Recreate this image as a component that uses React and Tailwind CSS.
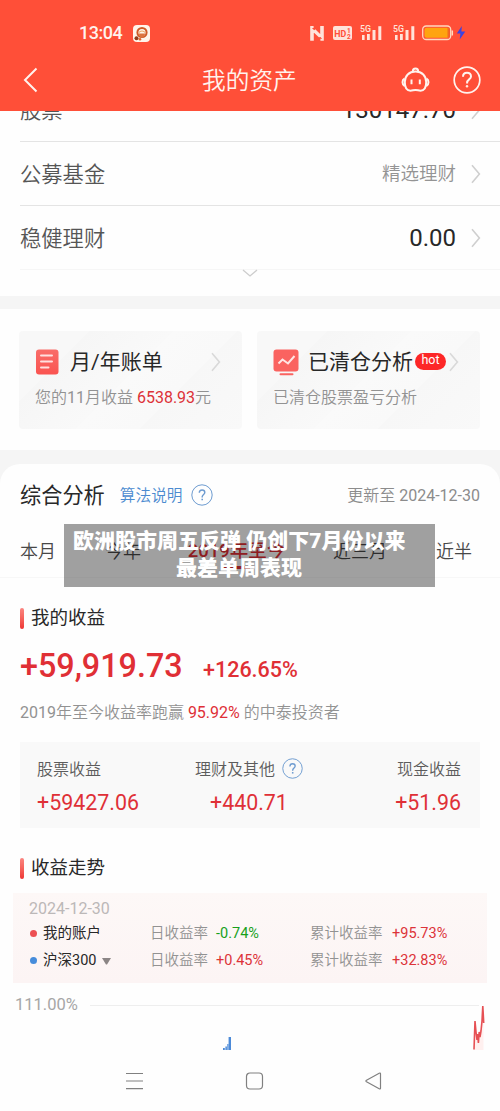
import React from "react";

const Chevron = ({ className = "" }) => (
  <svg className={className} width="10" height="20" viewBox="0 0 10 20" fill="none" stroke="#cfcfcf" strokeWidth="1.6">
    <path d="M1 1.2 8.4 10 1 18.8" />
  </svg>
);

const Help = ({ size = 22, stroke = "#6d9bd0" }) => (
  <svg width={size} height={size} viewBox="0 0 22 22" fill="none" stroke={stroke} className="shrink-0">
    <circle cx="11" cy="11" r="10.2" strokeWidth="1" />
    <path d="M8.3 8.8c0-1.7 1.1-2.8 2.8-2.8s2.7 1.1 2.7 2.5c0 1.9-2.6 2.1-2.6 4.3v.6" strokeWidth="1.4" />
    <path d="M10.4 15.5h1.6" strokeWidth="1.6" />
  </svg>
);

const Signal = () => (
  <svg width="24" height="17" viewBox="0 0 24 17" fill="#ffe3da">
    <text x="0" y="7.300" fontSize="9.300" fontWeight="500" fontFamily="Roboto, sans-serif" textLength="11" lengthAdjust="spacingAndGlyphs">5G</text>
    <rect x="2" y="10" width="2.600" height="5" />
    <rect x="7" y="9" width="2.800" height="6" />
    <rect x="12.500" y="5" width="3" height="10" />
    <rect x="18.300" y="1.200" width="3" height="13.800" />
  </svg>
);

function StatusBar() {
  return (
    <div className="flex h-[50px] items-center pt-4 pl-[79px]">
      <span className="w-[54px] text-[18px] leading-none font-medium tracking-[-0.5px]">13:04</span>
      <svg width="17" height="17" viewBox="0 0 17 17">
        <rect width="17" height="17" rx="4" fill="#fff4ea" />
        <circle cx="9" cy="7.5" r="4.6" fill="none" stroke="#cf5a27" strokeWidth="2" />
        <path d="M5.5 8.5h7l-2.2 4H7.5z" fill="#dc7440" />
        <path d="M6 7.5c1.5-2 4.500-2 6 0" fill="none" stroke="#e8a35c" strokeWidth="1.2" />
        <circle cx="3.5" cy="13.3" r="2" fill="#8f3b1a" />
        <circle cx="7" cy="14.300" r="1.3" fill="#e2662f" />
      </svg>
      <svg className="ml-[160px]" width="14" height="15" viewBox="0 0 14 15" fill="none">
        <path d="M3.600.9H1.200v12.800h1.600V4.200l7 6.500M10.400 13.700h2.400V.9h-1.600v9.500L4.600 4" stroke="#ffe3da" strokeWidth="2" />
      </svg>
      <svg className="ml-[9px]" width="19" height="14" viewBox="0 0 19 14">
        <rect width="19" height="14" rx="2" fill="#ffe3da" />
        <g fill="#ff4f38" fontFamily="Roboto, sans-serif" fontWeight="700">
          <text x="1.300" y="10.600" fontSize="9.500" textLength="12" lengthAdjust="spacingAndGlyphs">HD</text>
          <text x="14" y="6.500" fontSize="6.500">1</text>
          <text x="14" y="12.800" fontSize="6.500">2</text>
        </g>
      </svg>
      <div className="ml-[8px] flex gap-[9px]"><Signal /><Signal /></div>
      <svg className="ml-[5px]" width="45" height="16" viewBox="0 0 45 16">
        <rect x=".7" y="1" width="28" height="13.500" rx="3.500" fill="none" stroke="#ffd9bd" strokeWidth="1.300" />
        <rect x="2.500" y="2.800" width="24.500" height="10" rx="2" fill="#ffa40f" />
        <path d="M25.500 3c1.500 0 2 .8 2 2v5.500c0 1.300-.5 2-2 2z" fill="#f26b1d" />
        <path d="M30.300 5.500v5" stroke="#ffd9bd" strokeWidth="1.500" />
        <path d="M39.800 1 34.800 8.600h3.600l-.7 5.800 5.600-7.800h-3.900z" fill="#3d43e0" />
      </svg>
    </div>
  );
}

function Header() {
  return (
    <header className="h-[111px] shrink-0 bg-[#ff4f38] text-[#fff3ee]">
      <StatusBar />
      <div className="flex h-[60px] items-center pr-[19px] pl-[23px]">
        <svg width="16" height="26" viewBox="0 0 16 26" fill="none" stroke="currentColor" strokeWidth="2">
          <path d="M13.500 1.500 2 13l11.500 11.500" />
        </svg>
        <h1 className="mt-[2px] ml-[163px] text-[23.700px] leading-[34px] font-[350]">我的资产</h1>
        <div className="ml-auto flex items-center gap-[23px]">
          <svg width="29" height="26" viewBox="0 0 29 26" fill="none" stroke="currentColor" strokeWidth="2">
            <path d="M14.500 4.500C8 4.500 3.800 8.800 3.800 15c0 5.500 2 8.700 5.700 8.700 2 0 3-.8 5-.8s3 .8 5 .8c3.700 0 5.700-3.200 5.700-8.700 0-6.200-4.200-10.500-10.700-10.500Z" />
            <path d="M3.500 11.500C.8 13 .8 17.500 3.700 19M25.500 11.500c2.700 1.500 2.700 6-.2 7.500" />
            <path d="M11.800 4.500c0-4 5.400-4 5.400 0" />
            <path d="M10.500 12.500v4.700M18.800 12.500v4.700" />
          </svg>
          <svg width="28" height="28" viewBox="0 0 28 28" fill="none" stroke="currentColor">
            <circle cx="14" cy="14" r="12.800" strokeWidth="1.700" />
            <path d="M10 10.800c0-2.400 1.600-4 4-4s4 1.500 4 3.700c0 2.800-3.900 3-3.900 6.200v.8" strokeWidth="2" />
            <circle cx="14" cy="20.300" r="1" fill="currentColor" strokeWidth=".6" />
          </svg>
        </div>
      </div>
    </header>
  );
}

const AssetRow = ({ label, children, line = "border-[#e4e4e4]" }) => (
  <div className={`ml-[20px] flex h-[64px] shrink-0 items-center border-b pr-[19px] ${line}`}>
    <span className="flex-1 pt-[2px] text-[21.300px] font-[350] text-[#555]">{label}</span>
    {children}
    <Chevron className="ml-[15px]" />
  </div>
);

function Assets() {
  return (
    <section className="h-[185px] shrink-0">
      <div className="flex h-[31px] flex-col justify-end overflow-hidden">
        <AssetRow label="股票"><span className="text-[24px]">130147.70</span></AssetRow>
      </div>
      <AssetRow label="公募基金"><span className="pt-[2px] text-[18.500px] font-[350] text-[#949494]">精选理财</span></AssetRow>
      <AssetRow label="稳健理财" line="border-[#f6f6f6]"><span className="text-[24px]">0.00</span></AssetRow>
      <svg className="mx-auto -mt-px" width="16" height="9" viewBox="0 0 16 9" fill="none" stroke="#cdcdcd" strokeWidth="1.300">
        <path d="m1 1 7 6 7-6" />
      </svg>
    </section>
  );
}

const Card = ({ icon, title, badge, children, className }) => (
  <div className={`h-[98px] rounded bg-linear-[135deg,#f8f8f8_0%,#f8f8f8_22%,#f6f6f6_22%,#f9f9f9_48%,#fafafa_48%,#f9f9f9_68%,#f7f7f7_68%,#f9f9f9_100%] pt-[13px] ${className}`}>
    <div className="flex h-[36px] items-center">
      {icon}
      <span className="pt-[2px] text-[21px] whitespace-nowrap">{title}</span>
      {badge}
    </div>
    <p className="mt-[5px] text-[16px] leading-[26px] font-[350] whitespace-nowrap text-[#929292]">{children}</p>
  </div>
);

function Cards() {
  return (
    <section className="flex h-[141px] shrink-0 gap-[15px] pt-[22px] pl-[19px]">
      <Card
        className="w-[223px] pl-[16px]"
        title="月/年账单"
        icon={
          <svg className="mr-[10px]" width="25" height="26" viewBox="0 0 25 26">
            <defs>
              <linearGradient id="bill" x1="0" y1="0" x2="0" y2="1"><stop stopColor="#f96d69" /><stop offset="1" stopColor="#fa5350" /></linearGradient>
            </defs>
            <rect x="1" y=".5" width="22.500" height="25" rx="3" fill="url(#bill)" />
            <path d="M6 6.500h11M6 12.500h11M6 18.500h7.500" stroke="#ffe0df" strokeWidth="2" strokeLinecap="round" />
          </svg>
        }
        badge={<Chevron className="mr-[21px] ml-auto opacity-75" />}
      >
        您的<span className="font-normal">11</span>月收益 <span className="font-normal text-[#dd3238]">6538.93</span>元
      </Card>
      <Card
        className="w-[223px] pl-[16px]"
        title="已清仓分析"
        icon={
          <svg className="mr-[9px]" width="26" height="27" viewBox="0 0 26 27">
            <rect x=".5" y=".5" width="25" height="22" rx="3" fill="#fa6360" />
            <path d="m5.500 14.500 4-4 5.500 4 6.500-7.500" fill="none" stroke="#ffe5e4" strokeWidth="2" />
            <path d="M7.500 25.300h12" stroke="#fa6360" strokeWidth="2" strokeLinecap="round" />
          </svg>
        }
        badge={
          <>
            <span className="-mt-[2px] ml-[2px] flex h-[17px] w-[31px] shrink-0 items-center justify-center rounded-full bg-[#fd2727] pb-px text-[12.500px] leading-none text-white">hot</span>
            <Chevron className="ml-[3px] shrink-0 opacity-75" />
          </>
        }
      >
        已清仓股票盈亏分析
      </Card>
    </section>
  );
}

const SectionTitle = ({ children }) => (
  <h2 className="flex h-[26px] items-center text-[18.500px] font-normal">
    <span className="mr-[7px] h-[21px] w-[4px] rounded-full bg-linear-to-b from-[#fb8580] to-[#ee3434]" />
    <span className="pt-[2px]">{children}</span>
  </h2>
);

function Tabs() {
  return (
    <div className="relative mt-[12px] h-[55px] border-b border-[#f7f7f7]">
      <div className="flex h-[54px] items-center pt-[2px] pl-[20px] text-[18px] font-[350] whitespace-nowrap text-[#484848]">
        <span className="w-[85px]">本月</span>
        <span className="w-[83px]">今年</span>
        <span className="flex w-[97px] flex-col items-center pt-[2px] text-[18.500px] font-medium text-[#e02f35]">
          2019年至今
          <i className="-mb-[3px] h-[3px] w-[27px] bg-[#e02f35]" />
        </span>
        <span className="ml-[48px] w-[103px]">近三月</span>
        <span>近半</span>
      </div>
      <div className="absolute top-px left-[64px] h-[63px] w-[371px] bg-black/37 pt-[4px] pl-[9px] text-[21px] leading-[27px] font-black whitespace-nowrap text-white">
        <p>欧洲股市周五反弹 仍创下7月份以来</p>
        <p className="pl-[103px]">最差单周表现</p>
      </div>
    </div>
  );
}

function Summary() {
  const label = "flex h-[26px] items-center pt-[2px] text-[16px] font-[350] text-[#5c5c5c]";
  const value = "mt-[6px] text-[21.400px] leading-[30px] text-[#df3037]";
  return (
    <div className="mx-[20px] mt-[16px] flex h-[86px] bg-[#f9f9f9] pt-[14px] pr-[19px] pl-[17px]">
      <div className="w-[158px]">
        <p className={label}>股票收益</p>
        <p className={value}>+59427.06</p>
      </div>
      <div className="w-[108px]">
        <p className={label}>理财及其他<span className="-mt-[3px] ml-[7px]"><Help size={21} /></span></p>
        <p className={`${value} pl-[15px]`}>+440.71</p>
      </div>
      <div className="flex flex-1 flex-col items-end">
        <p className={label}>现金收益</p>
        <p className={value}>+51.96</p>
      </div>
    </div>
  );
}

const LegendRow = ({ dot, name, day, dayColor, total }) => (
  <div className="flex h-[27px] items-center pt-px pl-[17px] whitespace-nowrap">
    <i className={`mr-[6px] mb-[2px] size-[7px] rounded-full ${dot}`} />
    <span className="flex w-[107px] items-center">{name}</span>
    <span className="w-[66px] font-[350] text-[#929292]">日收益率</span>
    <span className={`w-[94px] ${dayColor}`}>{day}</span>
    <span className="w-[82px] font-[350] text-[#929292]">累计收益率</span>
    <span className="text-[#dc3339]">{total}</span>
  </div>
);

function Trend() {
  return (
    <>
      <div className="mx-[13px] mt-[12px] h-[90px] bg-linear-to-b from-[#fdf8f7] to-[#fcf4f4] pt-[4px] text-[14.500px]">
        <p className="h-[23px] pl-[16px] text-[16px] leading-[24px] text-[#bcb8b8]">2024-12-30</p>
        <LegendRow dot="bg-[#ed5052]" name="我的账户" day="-0.74%" dayColor="text-[#17a11b]" total="+95.73%" />
        <LegendRow
          dot="bg-[#468cdb]"
          name={<>沪深300<svg className="mt-px ml-[6px]" width="9" height="7"><path d="M0 0h9L5 6.500H4z" fill="#8b8585" /></svg></>}
          day="+0.45%"
          dayColor="text-[#dc3339]"
          total="+32.83%"
        />
      </div>
      <div className="flex h-[67px] items-start pt-[11px] pl-[15px]">
        <span className="w-[75px] text-[16.500px] leading-[22px] text-[#a6a6a6]">111.00%</span>
        <svg width="396" height="56" viewBox="0 0 396 56">
          <path d="M0 11.500h389" stroke="#eee" />
          <path d="M133 54h1.800v2H133zM135.400 52.500h1.500V56h-1.500zM137.300 50h1V56h-1zM138.600 43h2.400v13h-2.400z" fill="#4c8ad8" />
          <path d="m384 55 1-28 2 15 1 7 3-9 1.500-26 1 18V56H384z" fill="#fff0ef" />
          <path d="M384 55.500 385 27l1 11 1 8 .6-6 .8 9 .8-11 .8 5 1-6 1-10 .8-15 .5 9 .4 8" fill="none" stroke="#e65054" strokeWidth="1.600" strokeLinejoin="bevel" />
        </svg>
      </div>
    </>
  );
}

function Analysis() {
  return (
    <section className="h-[586px] rounded-t-[20px] bg-[#fefefe] pt-[15px]">
      <div className="flex h-[32px] items-center pr-[20px] pl-[20px]">
        <h2 className="pt-[2px] text-[21.200px] font-normal">综合分析</h2>
        <span className="mr-[8px] ml-[15px] pt-[2px] text-[15.700px] font-[350] text-[#4c8bd0]">算法说明</span>
        <Help />
        <span className="ml-auto pt-[2px] text-[16px] font-[350] text-[#8c8c8c]">更新至 <span className="font-normal">2024-12-30</span></span>
      </div>
      <Tabs />
      <div className="mt-[27px] pl-[20px]">
        <SectionTitle>我的收益</SectionTitle>
        <div className="mt-[14px] flex h-[42px] items-baseline font-medium text-[#e02f35]">
          <span className="w-[183px] text-[32.300px] leading-[42px]">+59,919.73</span>
          <span className="text-[21.500px]">+126.65%</span>
        </div>
        <p className="mt-[13px] text-[16px] leading-[26px] font-[350] text-[#929292]">
          <span className="font-normal">2019</span>年至今收益率跑赢 <span className="font-normal text-[#df3037]">95.92%</span> 的中泰投资者
        </p>
      </div>
      <Summary />
      <div className="mt-[27px] pl-[20px]"><SectionTitle>收益走势</SectionTitle></div>
      <Trend />
    </section>
  );
}

function NavBar() {
  return (
    <nav className="flex h-[61px] items-center bg-[#fefefe] pl-[126px]">
      <svg width="256" height="18" viewBox="0 0 256 18" fill="none" stroke="#808080" strokeWidth="1.200">
        <path d="M0 1.500h17M0 9h17M0 16.700h17" />
        <rect x="120.500" y="1" width="16" height="16" rx="3.500" />
        <path d="M254.500 1.800v14.400c0 .8-.6 1-1.300.6l-12.700-7c-.8-.5-.8-1.100 0-1.600l12.700-7c.7-.4 1.300-.2 1.300.6Z" />
      </svg>
    </nav>
  );
}

export default function App() {
  return (
    <main className="flex h-[1111px] w-[500px] flex-col overflow-hidden bg-[#fefefe] font-[Roboto,'Noto_Sans_CJK_SC',sans-serif] text-[#282828]">
      <Header />
      <Assets />
      <div className="h-[13px] shrink-0 bg-[#f5f5f5]" />
      <Cards />
      <div className="shrink-0 bg-[#f5f5f5] pt-[14px]"><Analysis /></div>
      <NavBar />
    </main>
  );
}
